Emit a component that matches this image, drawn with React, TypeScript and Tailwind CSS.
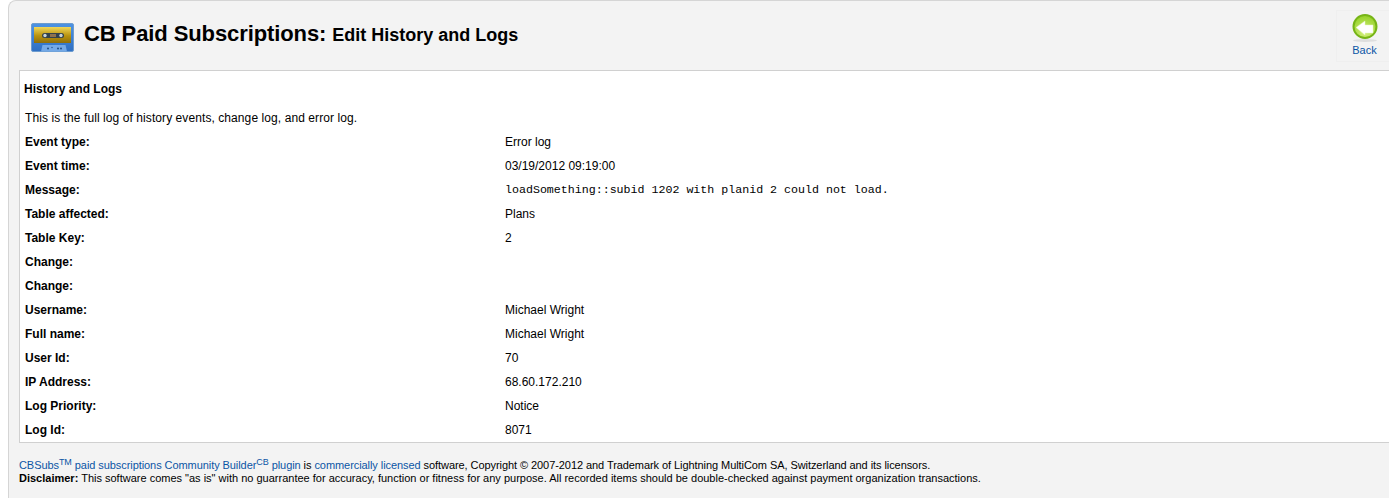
const rows: [string, string, boolean?][] = [
  ['Event type:', 'Error log'],
  ['Event time:', '03/19/2012 09:19:00'],
  ['Message:', 'loadSomething::subid 1202 with planid 2 could not load.', true],
  ['Table affected:', 'Plans'],
  ['Table Key:', '2'],
  ['Change:', ''],
  ['Change:', ''],
  ['Username:', 'Michael Wright'],
  ['Full name:', 'Michael Wright'],
  ['User Id:', '70'],
  ['IP Address:', '68.60.172.210'],
  ['Log Priority:', 'Notice'],
  ['Log Id:', '8071'],
];

function CassetteIcon() {
  return (
    <svg width="43" height="29" viewBox="0 0 43 29" className="block">
      <defs>
        <linearGradient id="gold" x1="0" y1="0" x2="0" y2="1">
          <stop offset="0" stopColor="#f0d75a" />
          <stop offset="0.55" stopColor="#b8920f" />
          <stop offset="1" stopColor="#8f6f08" />
        </linearGradient>
        <linearGradient id="shell" x1="0" y1="0" x2="0" y2="1">
          <stop offset="0" stopColor="#4d93e4" />
          <stop offset="1" stopColor="#2f6fc2" />
        </linearGradient>
      </defs>
      <rect x="0.5" y="0.5" width="42" height="28" rx="1.5" fill="url(#shell)" stroke="#6d9ccf" />
      <rect x="3" y="4" width="37" height="16" fill="url(#gold)" />
      <rect x="11" y="10" width="22" height="5" rx="2.5" fill="#33424c" />
      <circle cx="14" cy="12.5" r="1.7" fill="#c9d4da" />
      <circle cx="30" cy="12.5" r="1.7" fill="#c9d4da" />
      <rect x="19" y="11" width="6" height="3" fill="#8d7250" />
      <path d="M10 28.5 L11.5 22 H34.5 L36 28.5 Z" fill="#74a9e6" />
      <circle cx="17" cy="25.5" r="1" fill="#1f4f8a" />
      <circle cx="21" cy="24.5" r="0.7" fill="#1f4f8a" />
      <circle cx="27" cy="25.5" r="1" fill="#1f4f8a" />
      <circle cx="30" cy="25.5" r="1" fill="#1f4f8a" />
    </svg>
  );
}

function BackIcon() {
  return (
    <svg width="26" height="29" viewBox="0 0 26 29" className="block">
      <defs>
        <radialGradient id="green" cx="0.5" cy="0.75" r="0.75">
          <stop offset="0" stopColor="#d6f080" />
          <stop offset="1" stopColor="#92d024" />
        </radialGradient>
      </defs>
      <ellipse cx="13" cy="26.5" rx="12" ry="1.5" fill="#dedede" />
      <circle cx="13" cy="12.5" r="11.5" fill="url(#green)" stroke="#76b416" strokeWidth="2" />
      <path d="M4 13.5 L13 7 V11 H21 V19 H13 V21 Z" fill="#fff" stroke="#e6f5c0" strokeWidth="0.5" />
    </svg>
  );
}

export default function App() {
  return (
    <div className="h-[498px] overflow-hidden bg-white pl-2 font-['Liberation_Sans',Arial,sans-serif] text-xs text-black">
      <div className="h-full rounded-tl-lg border-l border-t border-[#d5d5d5] bg-[#f3f3f3] pl-[10px]">
        <div className="flex h-[69px] items-start">
          <div className="ml-[12px] mt-[22px]">
            <CassetteIcon />
          </div>
          <h1 className="ml-[10px] mt-[19px] text-[22px] font-bold leading-[28px] tracking-[-0.1px]">
            CB Paid Subscriptions: <span className="text-lg tracking-normal">Edit History and Logs</span>
          </h1>
          <a className="ml-auto mt-[9px] flex h-[52px] w-[53px] flex-col items-center border-y border-l border-[#efefef] pl-[3px] pt-[3px] text-[#0b55a5]">
            <BackIcon />
            <span className="text-[11px] leading-[14px]">Back</span>
          </a>
        </div>
        <div className="h-[373px] border-y border-l border-[#d0d0d0] bg-white pl-[5px]">
          <h2 className="-ml-px mt-[11px] font-bold leading-[14px]">History and Logs</h2>
          <p className="mt-[15px] leading-[14px] tracking-[0.08px]">This is the full log of history events, change log, and error log.</p>
          <div className="mt-[5px]">
            {rows.map(([label, value, mono], i) => (
              <div key={i} className="flex h-6 items-center">
                <div className="w-[480px] font-bold">{label}</div>
                {mono ? (
                  <div className="font-['Liberation_Mono','Courier_New',monospace] text-[11.64px]">{value}</div>
                ) : (
                  <div>{value}</div>
                )}
              </div>
            ))}
          </div>
        </div>
        <div className="mt-4 text-[11px] leading-[13px]">
          <p className="h-[13px] tracking-[-0.07px]">
            <a className="text-[#0b55a5]">CBSubs<sup className="text-[9px]">TM</sup> paid subscriptions</a>{' '}
            <a className="text-[#0b55a5]">Community Builder<sup className="text-[9px]">CB</sup> plugin</a> is{' '}
            <a className="text-[#0b55a5]">commercially</a> <a className="text-[#0b55a5]">licensed</a> software, Copyright © 2007-2012 and Trademark of Lightning MultiCom SA, Switzerland and its licensors.
          </p>
          <p>
            <b>Disclaimer:</b> This software comes "as is" with no guarrantee for accuracy, function or fitness for any purpose. All recorded items should be double-checked against payment organization transactions.
          </p>
        </div>
      </div>
    </div>
  );
}
